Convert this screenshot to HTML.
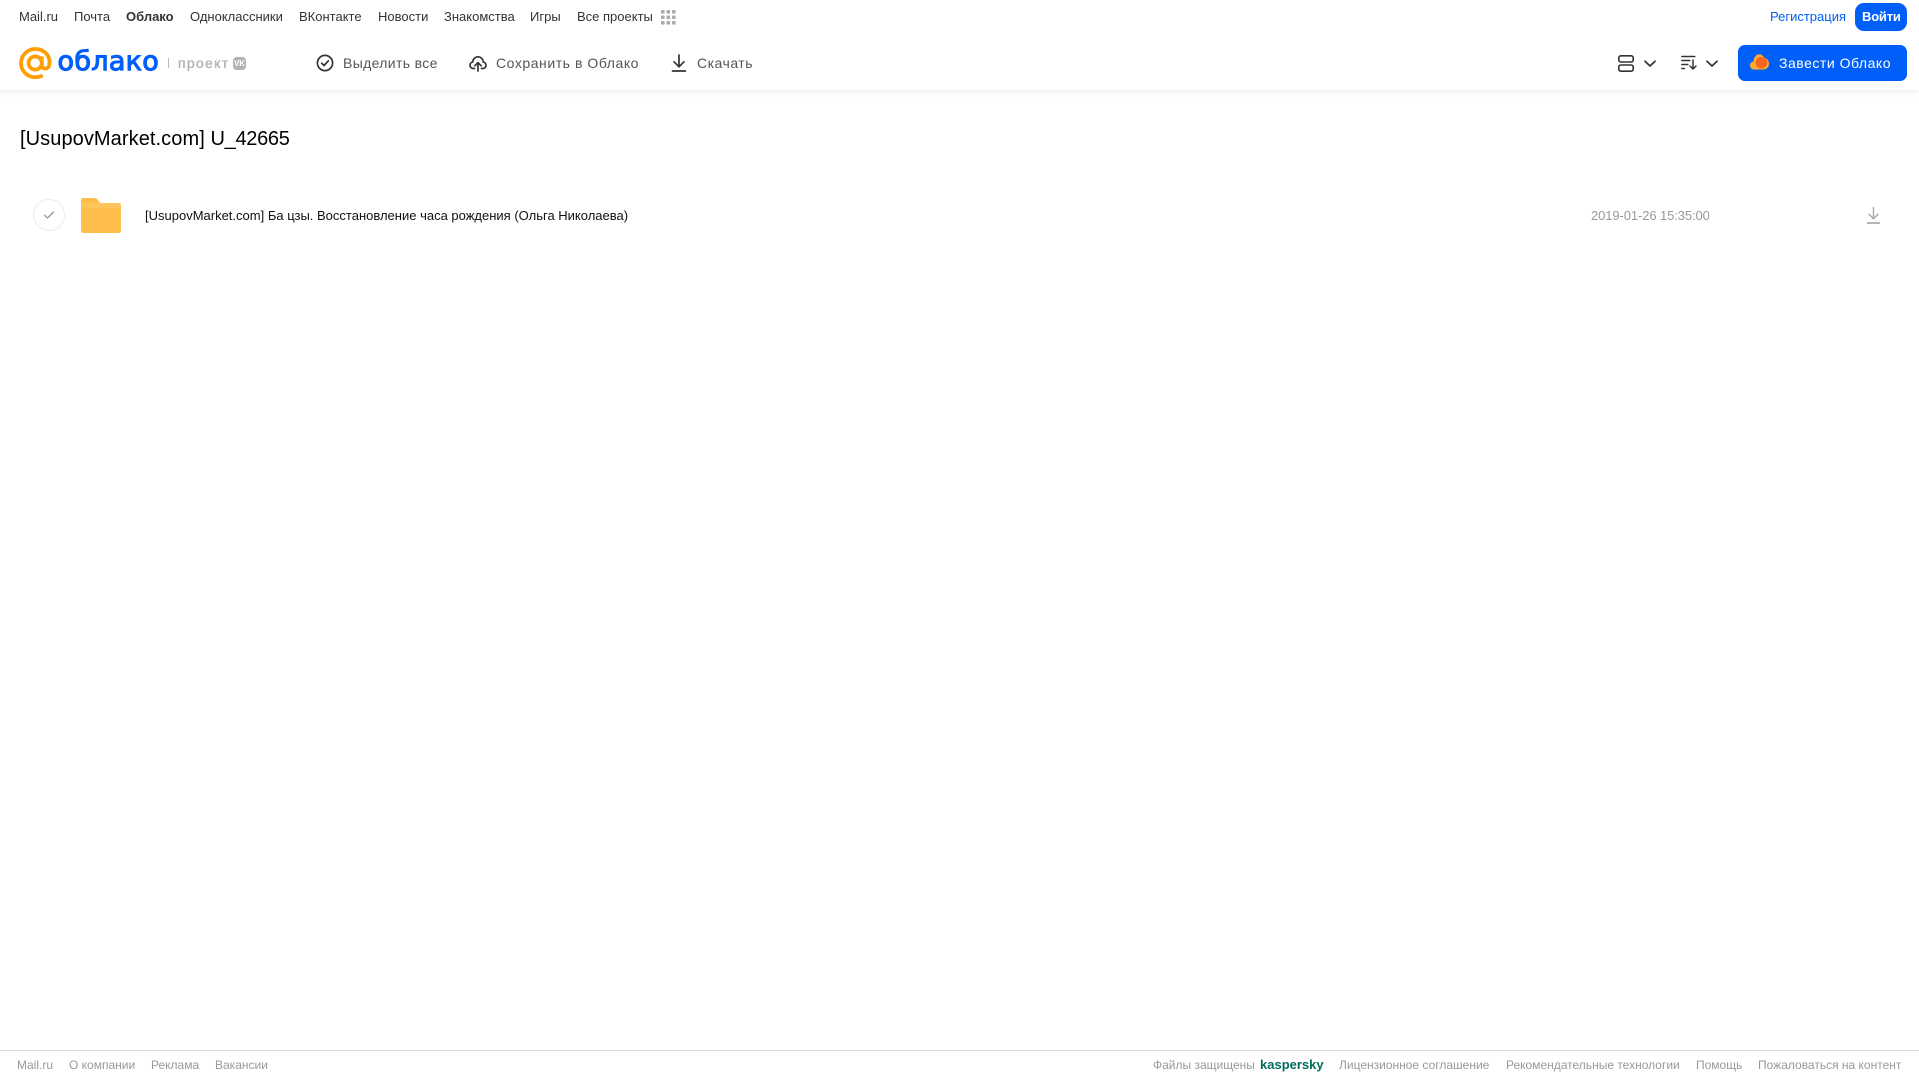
<!DOCTYPE html>
<html lang="ru">
<head>
<meta charset="utf-8">
<title>[UsupovMarket.com] U_42665</title>
<style>
html,body{margin:0;padding:0;background:#fff;}
body{width:1919px;height:1079px;position:relative;overflow:hidden;font-family:"Liberation Sans",Arial,sans-serif;color:#333;}
.t{position:absolute;white-space:nowrap;line-height:16px;}
.n{top:9px;font-size:13px;color:#333;}
.b{top:55px;font-size:14px;color:#555;letter-spacing:.35px;}
.f{top:1057px;font-size:12px;color:#999;}
svg{position:absolute;overflow:visible;}
#hdr{position:absolute;left:0;top:0;width:1919px;height:90px;background:#fff;box-shadow:0 2px 6px rgba(0,0,0,.07);}
.btn{position:absolute;background:#005ff9;}
</style>
</head>
<body>
<div id="hdr"></div>

<span class="t n" style="left:19px">Mail.ru</span>
<span class="t n" style="left:74px">Почта</span>
<span class="t n" style="left:126px;font-weight:bold">Облако</span>
<span class="t n" style="left:190px">Одноклассники</span>
<span class="t n" style="left:299px">ВКонтакте</span>
<span class="t n" style="left:378px">Новости</span>
<span class="t n" style="left:444px">Знакомства</span>
<span class="t n" style="left:530px">Игры</span>
<span class="t n" style="left:577px">Все проекты</span>
<svg style="left:661px;top:10px" width="15" height="15" fill="#aaa">
<rect x="0" y="0" width="3.6" height="3.6" rx="1"/><rect x="5.5" y="0" width="3.6" height="3.6" rx="1"/><rect x="11" y="0" width="3.6" height="3.6" rx="1"/>
<rect x="0" y="5.5" width="3.6" height="3.6" rx="1"/><rect x="5.5" y="5.5" width="3.6" height="3.6" rx="1"/><rect x="11" y="5.5" width="3.6" height="3.6" rx="1"/>
<rect x="0" y="11" width="3.6" height="3.6" rx="1"/><rect x="5.5" y="11" width="3.6" height="3.6" rx="1"/><rect x="11" y="11" width="3.6" height="3.6" rx="1"/>
</svg>

<span class="t n" style="left:1770px;color:#005ff9">Регистрация</span>
<div class="btn" style="left:1855px;top:3px;width:52px;height:28px;border-radius:9px"></div>
<span class="t n" style="left:1862px;color:#fff;font-weight:bold;letter-spacing:-.2px">Войти</span>

<!-- logo -->
<svg style="left:19px;top:47px" width="33" height="33" viewBox="0 0 33 33" fill="none" stroke="#ff9e00" stroke-width="3.8">
<circle cx="16.2" cy="16" r="6.6"/>
<path d="M22.8 9.500v8.500c0 5 6.800 5 7.600-.5C31.600 8.500 25 2 16.200 2 8.500 2 2 8.500 2 16.200 2 24 8.500 30.200 16.200 30.200c3 0 5.300-.7 7.500-2"/>
</svg>
<span class="t" style="left:57.500px;top:43px;line-height:38px;font-size:27px;color:#005ff9;font-family:'DejaVu Sans',sans-serif;letter-spacing:.3px;-webkit-text-stroke:1.1px #005ff9">облако</span>
<div style="position:absolute;left:168px;top:58px;width:1px;height:10px;background:#bbb"></div>
<span class="t" style="left:178px;top:55px;font-size:14px;color:#b0b0b0;letter-spacing:1.3px;-webkit-text-stroke:.3px #b0b0b0">проект</span>
<div style="position:absolute;left:233px;top:57px;width:13px;height:13px;border-radius:3.500px;background:#b3b3b3;color:#fff;font:bold 8px/13px 'Liberation Sans',sans-serif;text-align:center">VK</div>

<!-- toolbar -->
<svg style="left:316px;top:54px" width="18" height="18" viewBox="0 0 18 18" fill="none" stroke="#333" stroke-width="1.700">
<circle cx="9" cy="9" r="7.600"/><path d="M5.700 9.200l2.300 2.300 4.300-4.600" stroke-linecap="round" stroke-linejoin="round"/>
</svg>
<span class="t b" style="left:343px">Выделить все</span>

<svg style="left:469px;top:54px" width="18" height="18" viewBox="0 0 18 18" fill="none" stroke="#333" stroke-width="1.700" stroke-linecap="round" stroke-linejoin="round">
<path d="M5.500 14.500H4.200C2.400 14.500 1 13.100 1 11.300c0-1.600 1.100-2.900 2.600-3.200C4 5 6.300 2.800 9 2.800s5 2.200 5.400 5.300c1.500.3 2.600 1.600 2.600 3.200 0 1.800-1.400 3.200-3.200 3.200h-1.300"/>
<path d="M9 17V9M5.800 11.800L9 8.600l3.200 3.200"/>
</svg>
<span class="t b" style="left:496px;letter-spacing:.55px">Сохранить в Облако</span>

<svg style="left:670px;top:54px" width="18" height="18" viewBox="0 0 18 18" fill="none" stroke="#333" stroke-width="1.700" stroke-linecap="round" stroke-linejoin="round">
<path d="M9 1v11.500M4 7.800l5 5 5-5"/><path d="M2.500 17h13"/>
</svg>
<span class="t b" style="left:697px;letter-spacing:.5px">Скачать</span>

<svg style="left:1618px;top:55px" width="16" height="17" viewBox="0 0 16 17" fill="none" stroke="#333" stroke-width="1.600">
<rect x=".8" y=".8" width="14.400" height="6.200" rx="2"/><rect x=".8" y="10" width="14.400" height="6.200" rx="2"/>
</svg>
<svg style="left:1644px;top:60px" width="12" height="8" viewBox="0 0 12 8" fill="none" stroke="#333" stroke-width="1.700" stroke-linecap="round" stroke-linejoin="round"><path d="M1 1.200l5 4.800 5-4.800"/></svg>

<svg style="left:1681px;top:55px" width="16" height="15" viewBox="0 0 16 15" fill="none" stroke="#333" stroke-width="1.500" stroke-linecap="round" stroke-linejoin="round">
<path d="M.8 1.500h13M.8 5.500h8M.8 9.500h6M.8 13.500h2.500"/><path d="M12 5v9M9 11l3 3 3-3"/>
</svg>
<svg style="left:1706px;top:60px" width="12" height="8" viewBox="0 0 12 8" fill="none" stroke="#333" stroke-width="1.700" stroke-linecap="round" stroke-linejoin="round"><path d="M1 1.200l5 4.800 5-4.800"/></svg>

<div class="btn" style="left:1738px;top:45px;width:169px;height:36px;border-radius:7px"></div>
<svg style="left:1750px;top:54px" width="19" height="16" viewBox="0 0 19 16">
<path d="M4 15.500C1.800 15.500 0 13.700 0 11.500c0-2 1.400-3.600 3.300-3.900C3.800 3.300 6.200.2 9 .2c2.400 0 4.300 1.400 5.200 3.400C17 4.200 19 6.800 19 9.800c0 3.200-2.400 5.700-5.500 5.700z" fill="#ffa930"/>
<circle cx="11.500" cy="8.700" r="5.800" fill="#f4681d"/>
</svg>
<span class="t b" style="left:1779px;color:#fff;letter-spacing:.52px">Завести Облако</span>

<!-- title -->
<span class="t" style="left:20px;top:127px;line-height:24px;font-size:20px;color:#000;letter-spacing:.08px">[UsupovMarket.com]</span>
<span class="t" style="left:210.500px;top:127px;line-height:24px;font-size:20px;color:#000;letter-spacing:-.3px">U_42665</span>

<!-- row -->
<div style="position:absolute;left:33px;top:199px;width:30px;height:30px;border:1px solid #ececec;border-radius:50%"></div>
<svg style="left:43px;top:210px" width="12" height="10" viewBox="0 0 12 10" fill="none" stroke="#999" stroke-width="1.300" stroke-linecap="round" stroke-linejoin="round"><path d="M1.500 5.200l3 2.800 6-6"/></svg>
<svg style="left:81px;top:198px" width="40" height="35" viewBox="0 0 40 35">
<path d="M2 0h11c2 0 3 .8 4 2l2 3h19c1.100 0 2 .9 2 2v26c0 1.100-.9 2-2 2H2c-1.100 0-2-.9-2-2V2C0 .9.900 0 2 0z" fill="#ffbe4c"/>
<path d="M0 9.500V7c0-1.100.9-2 2-2h36c1.100 0 2 .9 2 2v2.500z" fill="#ffc966" opacity=".7"/>
</svg>
<span class="t" style="left:145px;top:208px;font-size:13px;color:#111">[UsupovMarket.com] Ба цзы. Восстановление часа рождения (Ольга Николаева)</span>
<span class="t" style="left:1591px;top:208px;font-size:13px;letter-spacing:-.1px;color:#999">2019-01-26 15:35:00</span>
<svg style="left:1866px;top:206px" width="15" height="18" viewBox="0 0 15 18" fill="none" stroke="#aaa" stroke-width="1.400">
<path d="M7.500 1v11.500M2.500 7.700l5 5 5-5"/><path d="M1 17h13" stroke-width="1.700"/>
</svg>

<!-- footer -->
<div style="position:absolute;left:0;top:1050px;width:1919px;height:1px;background:#d9d9d9"></div>
<span class="t f" style="left:17px">Mail.ru</span>
<span class="t f" style="left:69px">О компании</span>
<span class="t f" style="left:151px">Реклама</span>
<span class="t f" style="left:215px">Вакансии</span>
<span class="t f" style="left:1153px">Файлы защищены</span>
<span class="t f" style="left:1260px;font-weight:bold;color:#006d5c;font-size:13px">kaspersky</span>
<span class="t f" style="left:1339px">Лицензионное соглашение</span>
<span class="t f" style="left:1506px">Рекомендательные технологии</span>
<span class="t f" style="left:1696px">Помощь</span>
<span class="t f" style="left:1758px">Пожаловаться на контент</span>
</body>
</html>
